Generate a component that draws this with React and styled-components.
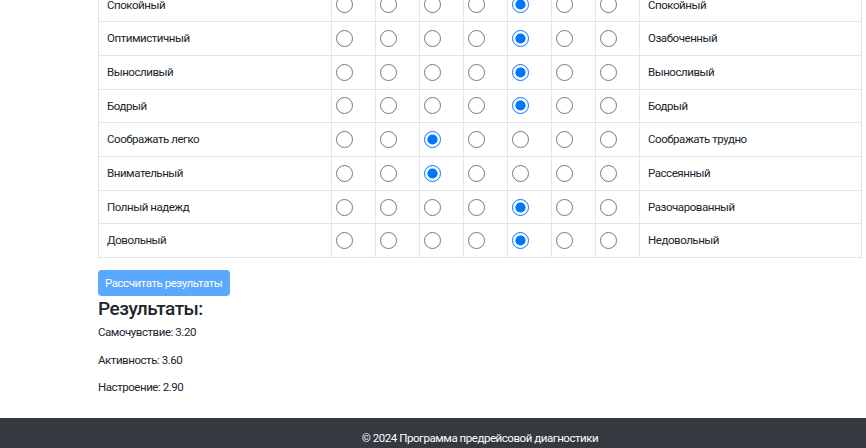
import React, { useState } from "react";
import styled, { createGlobalStyle } from "styled-components";

const GlobalStyle = createGlobalStyle`
  html, body {
    margin: 0;
    padding: 0;
    background: #fff;
    overflow: hidden;
  }
  body {
    font-family: Roboto, "Noto Sans", sans-serif;
    font-size: 11.5px;
    letter-spacing: -0.45px;
    color: #212529;
  }
`;

const Page = styled.div`
  height: 448px;
  display: flex;
  flex-direction: column;
  overflow: hidden;
`;

const Container = styled.div`
  width: 764px;
  margin-left: 98px;
`;

const Main = styled(Container)`
  margin-top: -12.5px;
  flex: 1;
`;

const Table = styled.table`
  width: 100%;
  border-collapse: collapse;
  table-layout: fixed;
`;

const Cell = styled.td`
  border: 1px solid #e3e6e9;
  padding: ${({ $radio }) => ($radio ? "7px 4px" : "7px 8px")};
  height: 18.7px;
  line-height: 18.7px;
  vertical-align: middle;
  white-space: nowrap;
`;

const Radio = styled.input`
  display: block;
  width: 17px;
  height: 17px;
  margin: 0;
`;

const Button = styled.button`
  margin-top: 12px;
  height: 26px;
  padding: 0 8px 0 7px;
  border: none;
  border-radius: 4px;
  background: #5aa9ff;
  color: #fff;
  font-family: inherit;
  font-size: 11.5px;
  letter-spacing: -0.45px;
`;

const Heading = styled.h3`
  margin: 1px 0 2px;
  font-size: 19px;
  font-weight: 500;
  letter-spacing: -0.5px;
  line-height: 24px;
`;

const Result = styled.p`
  margin: 0 0 8px;
  line-height: 19.5px;
`;

const Footer = styled.footer`
  background: #343a40;
  color: #fff;
  height: 30px;
  flex-shrink: 0;
`;

const FooterText = styled(Container)`
  text-align: center;
  padding-top: 11px;
  line-height: 19px;
`;

const rows = [
  ["Спокойный", "Спокойный", 4],
  ["Оптимистичный", "Озабоченный", 4],
  ["Выносливый", "Выносливый", 4],
  ["Бодрый", "Бодрый", 4],
  ["Соображать легко", "Соображать трудно", 2],
  ["Внимательный", "Рассеянный", 2],
  ["Полный надежд", "Разочарованный", 4],
  ["Довольный", "Недовольный", 4],
];

const App = () => {
  const [answers, setAnswers] = useState(rows.map((r) => r[2]));

  const pick = (row, col) => {
    const next = [...answers];
    next[row] = col;
    setAnswers(next);
  };

  return (
    <Page>
      <GlobalStyle />
      <Main>
        <Table>
          <colgroup>
            <col style={{ width: 233 }} />
            {[0, 1, 2, 3, 4, 5, 6].map((i) => (
              <col key={i} style={{ width: 44 }} />
            ))}
            <col />
          </colgroup>
          <tbody>
            {rows.map(([left, right], r) => (
              <tr key={r}>
                <Cell>{left}</Cell>
                {[0, 1, 2, 3, 4, 5, 6].map((c) => (
                  <Cell $radio key={c}>
                    <Radio
                      type="radio"
                      name={`q${r}`}
                      checked={answers[r] === c}
                      onChange={() => pick(r, c)}
                    />
                  </Cell>
                ))}
                <Cell>{right}</Cell>
              </tr>
            ))}
          </tbody>
        </Table>
        <Button>Рассчитать результаты</Button>
        <Heading>Результаты:</Heading>
        <Result>Самочувствие: 3.20</Result>
        <Result>Активность: 3.60</Result>
        <Result>Настроение: 2.90</Result>
      </Main>
      <Footer>
        <FooterText>© 2024 Программа предрейсовой диагностики</FooterText>
      </Footer>
    </Page>
  );
};

export default App;
